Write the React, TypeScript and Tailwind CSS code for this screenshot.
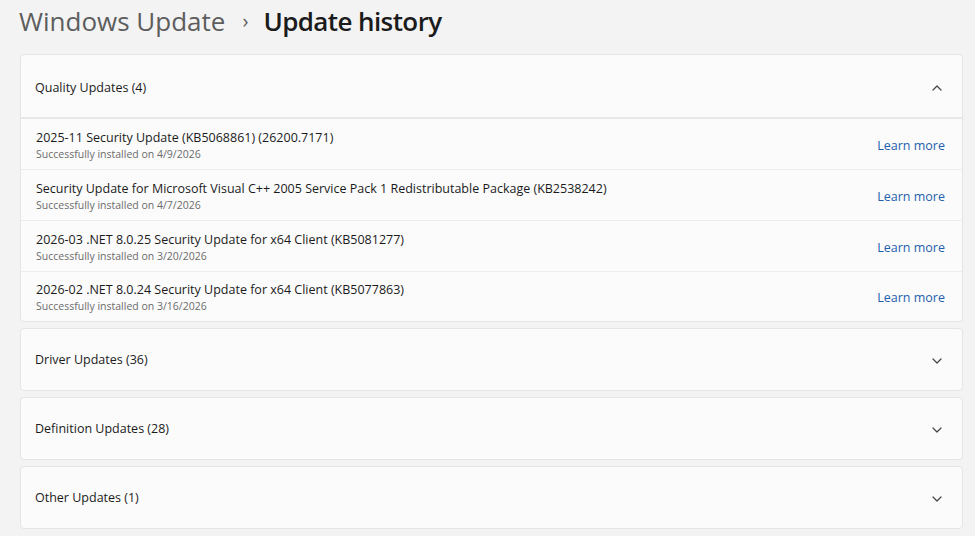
import { ChevronDown, ChevronUp } from 'lucide-react'

const quality = [
  { title: '2025-11 Security Update (KB5068861) (26200.7171)', date: '4/9/2026' },
  { title: 'Security Update for Microsoft Visual C++ 2005 Service Pack 1 Redistributable Package (KB2538242)', date: '4/7/2026' },
  { title: '2026-03 .NET 8.0.25 Security Update for x64 Client (KB5081277)', date: '3/20/2026' },
  { title: '2026-02 .NET 8.0.24 Security Update for x64 Client (KB5077863)', date: '3/16/2026' },
]

const others = ['Driver Updates (36)', 'Definition Updates (28)', 'Other Updates (1)']

export default function App() {
  return (
    <main className="min-h-screen w-[975px] h-[536px] overflow-hidden bg-[#f3f3f3] text-[#1b1b1b]" style={{ fontFamily: '"Open Sans", "Noto Sans", sans-serif' }}>
      <h1 className="flex items-center pl-[19px] pt-[3px] h-[38px] text-[26px] leading-none">
        <span className="text-[#5d5d5d]">Windows Update</span>
        <span className="ml-[17px] mr-[15px] text-[#5d5d5d] text-[20px]">›</span>
        <span className="font-semibold tracking-[-0.6px] text-[#1b1b1b]">Update history</span>
      </h1>

      <div className="flex flex-col gap-[6px] pl-[20px] pr-[12px] pt-[16px]">
        <section className="rounded-[4px] bg-[#fbfbfb] border border-[#e5e5e5]">
          <div className="flex items-center justify-between h-[64px] pt-[4px] pl-[14px] pr-[17px] border-b-[2px] border-[#e8e8e8]">
            <span className="text-[12.5px]">Quality Updates (4)</span>
            <ChevronUp className="w-[16px] h-[16px] text-[#444]" strokeWidth={1.8} />
          </div>
          {quality.map((q, i) => {
            const last = i === quality.length - 1
            return (
              <div key={i} className={`flex items-center justify-between pl-[15px] pr-[17px] ${last ? 'h-[49px] pb-[1px]' : 'h-[51px] border-b border-[#ededed]'}`}>
                <div className="flex flex-col pt-[1px]">
                  <span className="text-[12.5px] leading-[18px]">{q.title}</span>
                  <span className="text-[10.5px] leading-[14px] text-[#6b6b6b]">Successfully installed on {q.date}</span>
                </div>
                <span className="pt-[4px] text-[12.5px] text-[#1f5fae]">Learn more</span>
              </div>
            )
          })}
        </section>

        {others.map((o) => (
          <section key={o} className="flex items-center justify-between h-[63px] pt-[2px] pl-[14px] pr-[17px] rounded-[4px] bg-[#fbfbfb] border border-[#e5e5e5]">
            <span className="text-[12.5px]">{o}</span>
            <ChevronDown className="w-[16px] h-[16px] text-[#444]" strokeWidth={1.8} />
          </section>
        ))}
      </div>
    </main>
  )
}
